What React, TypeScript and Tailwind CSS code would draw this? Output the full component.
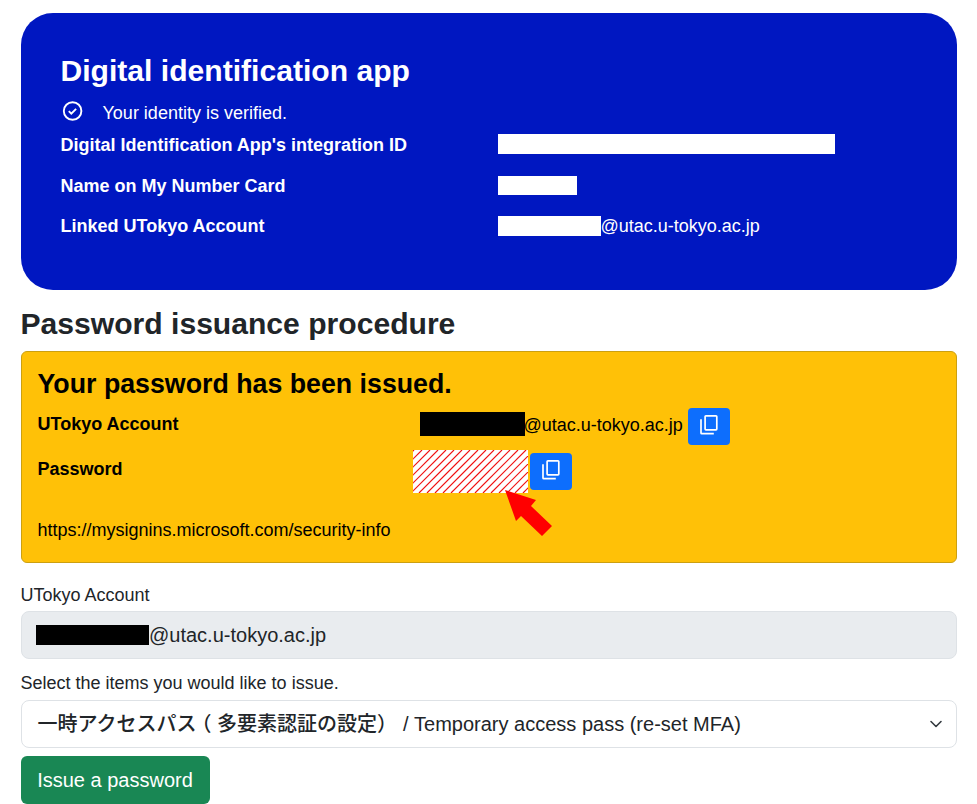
function CopyIcon() {
  return (
    <svg className="block size-6" viewBox="0 0 24 24" fill="none" stroke="currentColor" strokeWidth="1.7">
      <rect x="8.1" y="2.8" width="11.7" height="14" rx="0.8" />
      <path d="M4 6.3V19.9A.8.8 0 0 0 4.8 20.7H16.8" />
    </svg>
  );
}

function Row({ label, children, className }: { label: string; children: React.ReactNode; className: string }) {
  return (
    <div className={"flex items-start " + className}>
      <div className="w-[437px] shrink-0 font-bold">{label}</div>
      {children}
    </div>
  );
}

export default function App() {
  return (
    <main className="h-[804px] w-[977px] overflow-hidden bg-white px-[20.5px] pt-[13px] font-['Liberation_Sans','Noto_Sans_CJK_JP',sans-serif] text-[18px] leading-[27px] text-[#212529]">
      <section className="h-[277px] rounded-[32px] bg-[#0017c1] px-[40px] pt-[40px] text-white">
        <h1 className="text-[30.1px] leading-[36px] font-bold">Digital identification app</h1>
        <div className="mt-[10px] flex h-[33px]">
          <svg className="block size-6" viewBox="0 0 24 24" fill="none" stroke="currentColor" strokeWidth="1.9">
            <circle cx="11.6" cy="12" r="8.8" />
            <path d="M7.8 12.1l2.5 2.5 4.8-4.8" />
          </svg>
          <p className="mt-[1px] ml-[18px] leading-[27px]">Your identity is verified.</p>
        </div>
        <Row label="Digital Identification App's integration ID" className="h-[41px]">
          <div className="mt-[2px] h-5 w-[337px] bg-white" />
        </Row>
        <Row label="Name on My Number Card" className="h-[40px]">
          <div className="mt-[3px] h-[19px] w-[79px] bg-white" />
        </Row>
        <Row label="Linked UTokyo Account" className="h-[40px]">
          <div className="mt-[3px] h-5 w-[103px] bg-white" />
          <span>@utac.u-tokyo.ac.jp</span>
        </Row>
      </section>

      <h2 className="mt-[16px] text-[30.1px] leading-[36px] font-bold">Password issuance procedure</h2>

      <section className="mt-[9px] h-[212px] rounded-[6px] border border-[#cca010] bg-[#ffc107] px-4 pt-4 text-black">
        <h3 className="text-[26.75px] leading-[32px] font-bold">Your password has been issued.</h3>
        <div className="mt-2 flex h-[42px]">
          <div className="mt-[3px] w-[382px] font-bold">UTokyo Account</div>
          <div className="mt-1 h-6 w-[105px] bg-black" />
          <span className="mt-[4px] -ml-px w-[164px]">@utac.u-tokyo.ac.jp</span>
          <button className="flex h-[37px] w-[42px] justify-center rounded-[4px] bg-[#0d6efd] pt-[5px] text-white">
            <CopyIcon />
          </button>
        </div>
        <div className="relative flex h-[64px]">
          <div className="mt-[6px] w-[375px] font-bold">Password</div>
          <svg className="block h-[43px] w-[115px] bg-white" viewBox="0 0 115 43">
            {Array.from({ length: 20 }, (_, i) => (
              <path key={i} d={`M${i * 8 + 1} 0L${i * 8 - 42} 43`} stroke="#f01010" strokeWidth="1.15" />
            ))}
          </svg>
          <button className="mt-[3px] ml-[2px] flex h-[37px] w-[42px] justify-center rounded-[4px] bg-[#0d6efd] pt-[5px] text-white">
            <CopyIcon />
          </button>
          <svg className="absolute top-[40px] left-[467px] h-[46px] w-[47px]" viewBox="0 0 47 46">
            <path d="M0 0L31 10L26 16L47 36L37 46L16 26L11 31Z" fill="#f00" />
          </svg>
        </div>
        <p className="mt-[3px]">https://mysignins.microsoft.com/security-info</p>
      </section>

      <label className="mt-[19px] block">UTokyo Account</label>
      <div className="mt-[2px] flex h-12 rounded-[8px] border border-[#dee2e6] bg-[#e9ecef] pl-[14px] text-[20px] leading-[30px]">
        <div className="mt-[13px] h-5 w-[113px] bg-black" />
        <span className="mt-2 ml-[0.5px]">@utac.u-tokyo.ac.jp</span>
      </div>

      <label className="mt-[11px] block">Select the items you would like to issue.</label>
      <div className="mt-[3px] flex h-12 items-center justify-between rounded-[8px] border border-[#dee2e6] bg-white pr-[12px] pl-4 text-[20px] leading-[30px]">
        <span className="whitespace-pre">
          <span className="font-medium">
            一時アクセスパス<span className="mr-[5.5px] ml-[5px] [font-feature-settings:'halt']">（</span>多要素認証の設定）
          </span>
          <span className="ml-[0.4px]"> / Temporary access pass (re-set MFA)</span>
        </span>
        <svg className="size-4" viewBox="0 0 16 16" fill="none" stroke="#343a40" strokeWidth="1.6" strokeLinecap="round" strokeLinejoin="round">
          <path d="M3 5.5l5 5 5-5" />
        </svg>
      </div>
      <button className="mt-2 h-12 w-[189px] rounded-[6px] bg-[#198754] text-[20px] leading-[30px] text-white">
        Issue a password
      </button>
    </main>
  );
}
